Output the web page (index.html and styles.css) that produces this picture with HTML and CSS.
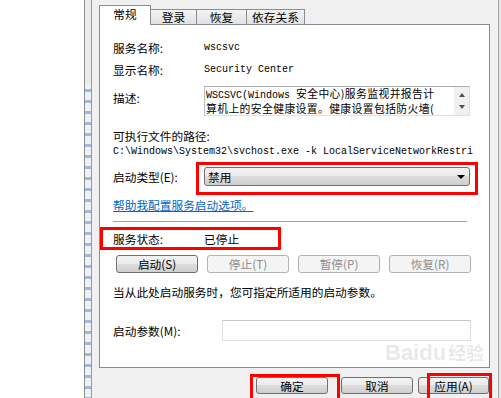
FILE: index.html
```html
<!DOCTYPE html>
<html lang="zh-CN">
<head>
<meta charset="utf-8">
<title>Security Center 属性</title>
<link rel="stylesheet" href="styles.css">
</head>
<body>
<div class="screen">
  <div class="backdrop"></div>
  <div class="edge"></div>
  <div class="strip"><div class="strip-top"></div><div class="strip-bottom"></div></div>
  <div class="edge-in"></div>
  <div class="dialog">
    <div class="tabs">
      <div class="tab active t1">常规</div>
      <div class="tab t2">登录</div>
      <div class="tab t3">恢复</div>
      <div class="tab t4">依存关系</div>
    </div>
    <div class="panel">
      <div class="row r-name"><span class="label">服务名称:</span><span class="mono">wscsvc</span></div>
      <div class="row r-display"><span class="label">显示名称:</span><span class="mono">Security Center</span></div>
      <div class="row r-desc">
        <span class="label">描述:</span>
        <div class="descbox">
          <div class="desctext"><div class="dline"><span class="mono">WSCSVC(Windows </span>安全中心)服务监视并报告计</div><div class="dline">算机上的安全健康设置。健康设置包括防火墙(</div></div>
          <div class="vscroll"><span class="arr up"></span><span class="arr down"></span></div>
        </div>
      </div>
      <div class="pathlabel">可执行文件的路径:</div>
      <div class="path mono">C:\Windows\System32\svchost.exe -k LocalServiceNetworkRestri</div>
      <div class="row r-type">
        <span class="label">启动类型(E):</span>
        <div class="combo"><span>禁用</span><span class="caret"></span><span class="mark mark-combo"></span></div>
      </div>
      <a class="link">帮助我配置服务启动选项。</a>
      <div class="sep"></div>
      <div class="row r-status"><span class="label">服务状态:</span><span>已停止</span><span class="mark mark-status"></span></div>
      <div class="btnrow">
        <div class="btn">启动(S)</div>
        <div class="btn disabled">停止(T)</div>
        <div class="btn disabled">暂停(P)</div>
        <div class="btn disabled">恢复(R)</div>
      </div>
      <div class="info">当从此处启动服务时，您可指定所适用的启动参数。</div>
      <div class="row r-param"><span class="label param-label">启动参数(M):</span><div class="input"></div></div>
    </div>
    <div class="footer">
      <div class="btn fbtn ok">确定<span class="mark mark-ok"></span></div>
      <div class="btn fbtn cancel">取消</div>
      <div class="btn fbtn apply">应用(A)<span class="mark mark-apply"></span></div>
    </div>
    <div class="watermark"><span class="wm-logo">Baidu</span><span class="wm-cn">经验</span></div>
  </div>
  <div class="edge-right"></div>
  <div class="edge-far"></div>
</div>
</body>
</html>
```
FILE: styles.css
```css
* { box-sizing: border-box; margin: 0; padding: 0; }
html, body { width: 501px; height: 398px; overflow: hidden; background: #fff; }
body {
  font-family: "Noto Sans CJK SC", "Noto Sans", sans-serif;
  font-size: 11.7px;
  color: #000;
}
.screen { display: flex; height: 398px; }
.backdrop { width: 84px; background: #fff; }
.edge { width: 1px; background: #8b8b8b; }
.strip { width: 6px; display: flex; flex-direction: column; }
.strip-top { height: 85px; background: #ececec; }
.strip-bottom {
  flex: 1;
  background: repeating-linear-gradient(to bottom, #eef2f7 0 4px, #9fb9db 4px 7px, #eef2f7 7px 11px);
}
.edge-in { width: 1px; background: #9a9a9a; }
.dialog {
  width: 406px;
  background: #f0f0f0;
  padding: 5px 8px 0 7px;
  position: relative;
}
.edge-right { width: 1px; background: #a3a3a3; }
.edge-far { width: 2px; background: #e6e6e6; }

/* tabs */
.tabs { display: flex; align-items: flex-end; height: 19px; }
.tab {
  height: 15px;
  line-height: 13px;
  text-align: center;
  border: 1px solid #898c95;
  border-bottom: none;
  background: linear-gradient(#f4f4f4, #e1e1e1);
  margin-left: -1px;
}
.tab.active {
  height: 20px;
  margin-bottom: -1px;
  margin-left: 0;
  background: #fff;
  line-height: 16px;
  position: relative;
  z-index: 1;
}
.t1 { width: 52px; }
.t2 { width: 47px; }
.t3 { width: 51px; }
.t4 { width: 59px; }

/* panel */
.panel {
  height: 344px;
  background: #fff;
  border: 1px solid #898c95;
  padding: 13px 18px 0 13px;
  display: flex;
  flex-direction: column;
}
.row { display: flex; align-items: center; position: relative; }
.label { width: 91px; flex: none; }
.mono { font-family: "Liberation Mono", monospace; font-size: 10px; letter-spacing: 0; }
.r-name { height: 18px; }
.r-display { height: 18px; margin-top: 4px; }
.r-desc { margin-top: 8px; align-items: flex-start; }
.r-desc .label { margin-top: 3px; line-height: 18px; }
.descbox {
  width: 266px;
  height: 30px;
  border: 1px solid #dbdfe6;
  border-top-color: #abadb3;
  border-left-color: #b9bcc3;
  display: flex;
  background: #fff;
}
.desctext {
  flex: 1;
  padding: 0 0 0 1px;
  white-space: nowrap;
  font-size: 10.8px;
  letter-spacing: 0.4px;
}
.dline { line-height: 12px; }
.desctext .mono { letter-spacing: 0; }
.vscroll {
  width: 15px;
  flex: none;
  background: #f0f0f0;
  display: flex;
  flex-direction: column;
  align-items: center;
  padding-top: 6px;
}
.arr { width: 0; height: 0; border-left: 3px solid transparent; border-right: 3px solid transparent; }
.arr.up { border-bottom: 4px solid #505050; }
.arr.down { border-top: 4px solid #505050; margin-top: 8px; }

.pathlabel { margin-top: 12px; line-height: 16px; }
.path { line-height: 16px; white-space: nowrap; overflow: hidden; width: 360px; }

.r-type { margin-top: 7px; }
.combo {
  position: relative;
  width: 266px;
  height: 19px;
  border: 1px solid #707070;
  border-radius: 3px;
  background: linear-gradient(#f2f2f2 0%, #ebebeb 50%, #dddddd 50%, #cfcfcf 100%);
  display: flex;
  align-items: center;
  padding-left: 3px;
  line-height: 17px;
}
.caret {
  margin-left: auto;
  margin-right: 4px;
  width: 0;
  height: 0;
  border-left: 4px solid transparent;
  border-right: 4px solid transparent;
  border-top: 4px solid #000;
}

.link {
  margin-top: 11px;
  line-height: 16px;
  color: #0066cc;
  text-decoration: underline;
  align-self: flex-start;
}
.sep { margin-top: 8px; height: 1px; width: 354px; background: #a0a0a0; }

.r-status { margin-top: 7px; height: 18px; }

.btnrow { margin-top: 8px; display: flex; gap: 9px; padding-left: 3px; }
.btn {
  position: relative;
  width: 82px;
  height: 18px;
  line-height: 16px;
  text-align: center;
  border: 1px solid #707070;
  border-radius: 3px;
  background: linear-gradient(#f2f2f2 0%, #ebebeb 50%, #dddddd 50%, #cfcfcf 100%);
}
.btn.disabled { border-color: #adb2b5; background: #f4f4f4; color: #8d8d8d; }

.info { margin-top: 11px; line-height: 16px; white-space: nowrap; }

.r-param { margin-top: 20px; }
.param-label { width: 109px; }
.input { width: 249px; height: 21px; border: 1px solid #dcdfe5; border-top-color: #c4c7cd; background: #fff; }

/* footer */
.footer { display: flex; justify-content: flex-end; padding-top: 9px; padding-right: 1px; }
.fbtn { height: 17px; line-height: 15px; }
.ok { width: 72px; margin-right: 13px; }
.cancel { width: 72px; margin-right: 5px; }
.apply { width: 71px; }

/* red annotation boxes */
.mark { position: absolute; border: 3px solid #ff0000; pointer-events: none; }
.mark-combo { left: -9px; top: -6px; width: 282px; height: 33px; }
.mark-status { left: -13px; top: -2px; width: 181px; height: 23px; }
.mark-ok { left: -7px; top: -4px; width: 90px; height: 30px; }
.mark-apply { left: 8px; top: -5px; width: 65px; height: 30px; }

/* watermark */
.watermark {
  position: absolute;
  left: 293px;
  top: 341px;
  color: rgba(120, 120, 120, 0.16);
  pointer-events: none;
  white-space: nowrap;
  line-height: 22px;
}
.wm-logo { font-family: "Liberation Sans", sans-serif; font-weight: bold; font-size: 22px; }
.wm-cn { font-size: 18px; font-weight: bold; margin-left: 2px; }
```
